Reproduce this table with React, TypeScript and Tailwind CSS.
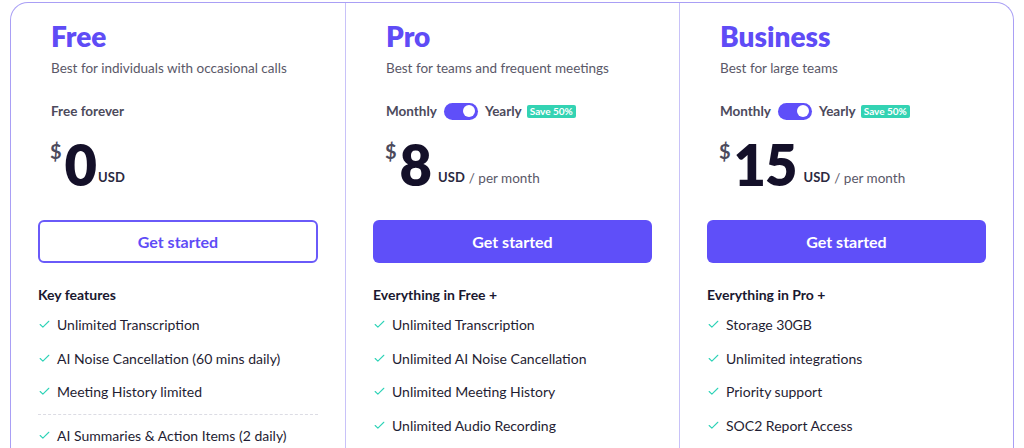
import { Check } from 'lucide-react'

type Plan = {
  name: string
  blurb: string
  price: string
  toggle: boolean
  period: boolean
  filled: boolean
  heading: string
  features: string[]
  extra?: string[]
}

const plans: Plan[] = [
  {
    name: 'Free',
    blurb: 'Best for individuals with occasional calls',
    price: '0',
    toggle: false,
    period: false,
    filled: false,
    heading: 'Key features',
    features: ['Unlimited Transcription', 'AI Noise Cancellation (60 mins daily)', 'Meeting History limited'],
    extra: ['AI Summaries & Action Items (2 daily)'],
  },
  {
    name: 'Pro',
    blurb: 'Best for teams and frequent meetings',
    price: '8',
    toggle: true,
    period: true,
    filled: true,
    heading: 'Everything in Free +',
    features: [
      'Unlimited Transcription',
      'Unlimited AI Noise Cancellation',
      'Unlimited Meeting History',
      'Unlimited Audio Recording',
    ],
  },
  {
    name: 'Business',
    blurb: 'Best for large teams',
    price: '15',
    toggle: true,
    period: true,
    filled: true,
    heading: 'Everything in Pro +',
    features: ['Storage 30GB', 'Unlimited integrations', 'Priority support', 'SOC2 Report Access'],
  },
]

function Feature({ text }: { text: string }) {
  return (
    <li className="flex h-[33.5px] items-center gap-[6px] text-[14px] text-[#1f1d33]">
      <Check className="h-[13px] w-[13px] text-[#2ed3b7]" strokeWidth={2} />
      <span>{text}</span>
    </li>
  )
}

function PlanColumn({ plan, first }: { plan: Plan; first: boolean }) {
  return (
    <div className={first ? 'px-[27px]' : 'border-l border-[#c8c2f8] px-[27px]'}>
      <div className="pl-[13px]">
        <h2 className="mt-[15px] text-[28px] leading-[36px] font-extrabold text-[#5f4cf6]">{plan.name}</h2>
        <p className="mt-[4px] text-[13.5px] leading-[20px] text-[#5a5868]">{plan.blurb}</p>
        <div className="mt-[23px] flex h-[20px] items-center text-[13.5px] font-bold text-[#4c4a5c]">
          {plan.toggle ? (
            <>
              <span>Monthly</span>
              <span className="ml-[7px] flex h-[17px] w-[34px] items-center justify-end rounded-full bg-[#5f4ff9] pr-[3px]">
                <span className="h-[12px] w-[12px] rounded-full bg-white" />
              </span>
              <span className="ml-[7px]">Yearly</span>
              <span className="ml-[5px] rounded-[2px] bg-[#33d3b3] px-[3px] py-[1px] text-[10px] leading-[11px] font-bold text-white">
                Save 50%
              </span>
            </>
          ) : (
            <span>Free forever</span>
          )}
        </div>
        <div className="mt-[21px] flex h-[46px] items-end">
          <span className="-ml-[1px] -mt-[1px] self-start text-[20px] leading-[20px] font-bold text-[#4c4a5c]">$</span>
          <span className="ml-[3px] text-[56px] leading-[46px] font-extrabold tracking-[-1px] text-[#141029]">
            {plan.price}
          </span>
          <span className={(plan.period ? 'ml-[7px]' : 'ml-[2px]') + ' mb-[1px] text-[13px] font-bold text-[#2b2940]'}>USD</span>
          {plan.period && <span className="ml-[4px] text-[13.5px] text-[#5a5868]">/ per month</span>}
        </div>
      </div>
      <button
        className={
          plan.filled
            ? 'mt-[32px] h-[43px] w-full rounded-[6px] bg-[#5f4ff9] text-[16px] font-bold text-white'
            : 'mt-[32px] h-[43px] w-full rounded-[6px] border-2 border-[#6a5af9] bg-white text-[16px] font-bold text-[#5f4cf6]'
        }
      >
        Get started
      </button>
      <h3 className="mt-[22px] text-[14px] leading-[20px] font-bold text-[#1a1830]">{plan.heading}</h3>
      <ul className="mt-[3px]">
        {plan.features.map((f) => (
          <Feature key={f} text={f} />
        ))}
      </ul>
      {plan.extra && (
        <>
          <div className="mt-[5px] border-t border-dashed border-[#dcdce4]" />
          <ul className="mt-[4px]">
            {plan.extra.map((f) => (
              <Feature key={f} text={f} />
            ))}
          </ul>
        </>
      )}
    </div>
  )
}

export default function App() {
  return (
    <div className="h-[448px] overflow-hidden bg-white px-[10px] pt-[2px]" style={{ fontFamily: 'Lato, "Noto Sans", sans-serif' }}>
      <div className="grid h-[600px] grid-cols-3 rounded-t-[18px] border border-b-0 border-[#a99ff5]">
        {plans.map((p, i) => (
          <PlanColumn key={p.name} plan={p} first={i === 0} />
        ))}
      </div>
    </div>
  )
}
